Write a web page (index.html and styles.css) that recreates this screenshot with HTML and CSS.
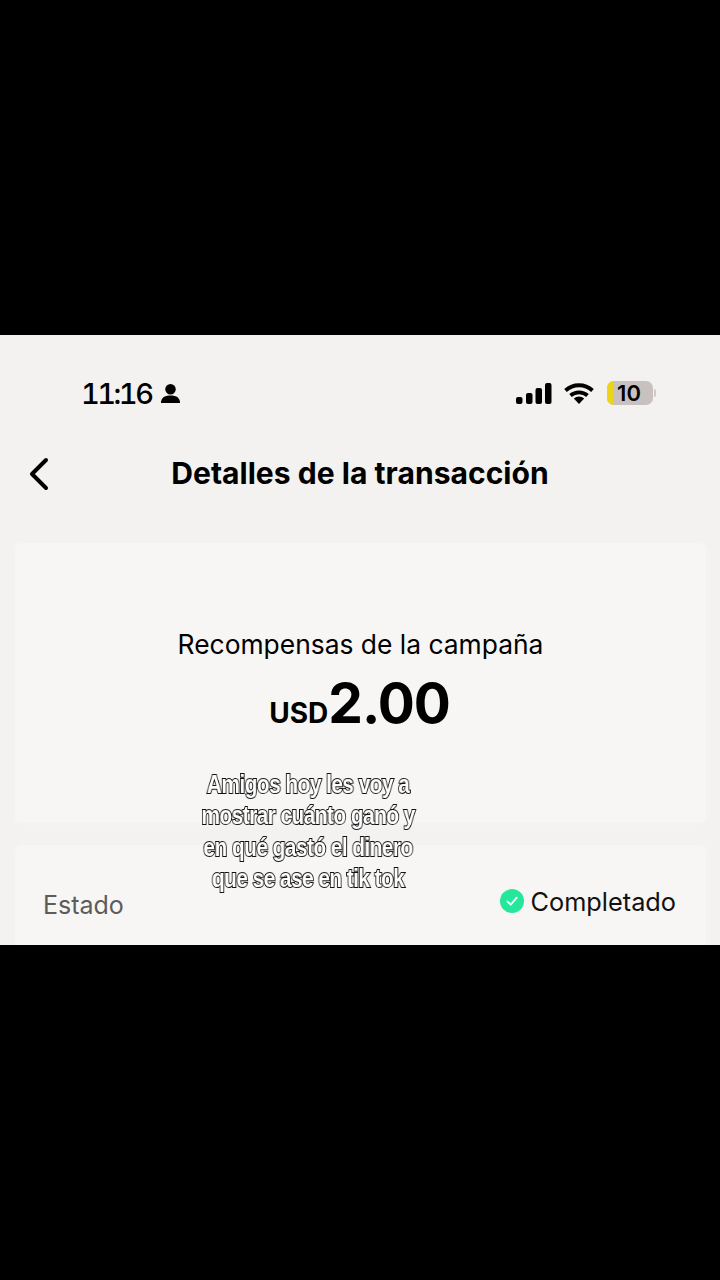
FILE: index.html
```html
<!DOCTYPE html>
<html lang="es">
<head>
  <meta charset="UTF-8" />
  <meta name="viewport" content="width=device-width, initial-scale=1.0"/>
  <title>Detalles de la transacción</title>
  <link rel="stylesheet" href="styles.css">
</head>
<body>
  <div class="screen">
    <div class="status-bar">
      <div class="status-left">
        <span class="clock">11:16</span>
        <svg class="person" width="21" height="21" viewBox="0 0 22 22"><circle cx="11" cy="6.500" r="5.500"/><path d="M1 21c0-5.500 3.500-8 10-8s10 2.500 10 8z"/></svg>
      </div>
      <div class="status-right">
        <svg class="signal" width="36" height="21" viewBox="0 0 36 21"><rect x="0" y="14" width="6.500" height="7" rx="2"/><rect x="10" y="10" width="6.500" height="11" rx="2"/><rect x="19.500" y="5" width="6.500" height="16" rx="2"/><rect x="29" y="0" width="6.500" height="21" rx="2"/></svg>
        <svg class="wifi" width="30" height="21" viewBox="0 0 30 21"><path d="M1.500 7.500a20 20 0 0 1 27 0M6.500 12.500a13 13 0 0 1 17 0" fill="none" stroke="#000" stroke-width="3.800"/><path d="M9.800 15.500a7.500 7.500 0 0 1 10.400 0L15 21z"/></svg>
        <div class="battery"><span class="battery-level"></span><span class="battery-num">10</span></div>
        <span class="battery-cap"></span>
      </div>
    </div>

    <div class="nav">
      <svg class="back" width="22" height="34" viewBox="0 0 22 34"><path d="M18 3 4 17l14 14" fill="none" stroke="#000" stroke-width="4" stroke-linecap="round" stroke-linejoin="round"/></svg>
      <h1 class="nav-title">Detalles de la transacción</h1>
    </div>

    <div class="card card-amount">
      <div class="amount-label">Recompensas de la campaña</div>
      <div class="amount"><span class="currency">USD</span><span class="value">2.00</span></div>
    </div>

    <div class="card card-details">
      <div class="row">
        <span class="row-label">Estado</span>
        <span class="row-value">
          <svg width="24" height="24" viewBox="0 0 24 24"><circle cx="12" cy="12" r="12" fill="#25e79b"/><path d="M7.500 12.500l3.200 3.200 6-7" fill="none" stroke="#fff" stroke-width="1.800" stroke-linecap="round" stroke-linejoin="round"/></svg>
          Completado
        </span>
      </div>
    </div>

    <div class="caption">
      <div>Amigos hoy les voy a</div>
      <div>mostrar cuánto ganó y</div>
      <div>en qué gastó el dinero</div>
      <div>que se ase en tik tok</div>
    </div>
  </div>
</body>
</html>
```

FILE: styles.css
```css
html, body {
  margin: 0;
  height: 1280px;
  background: #000;
  overflow: hidden;
}
body {
  padding-top: 335px;
  box-sizing: border-box;
  font-family: Inter, 'Liberation Sans', sans-serif;
  color: #000;
}
.screen {
  position: relative;
  height: 610px;
  overflow: hidden;
  background: #f3f2f0;
}
.status-bar {
  display: flex;
  justify-content: space-between;
  align-items: center;
  height: 22px;
  padding: 47px 67px 0 81px;
}
.status-left, .status-right {
  display: flex;
  align-items: center;
}
.clock {
  font-size: 29px;
  font-weight: 500;
  font-feature-settings: 'tnum';
  letter-spacing: -2.500px;
  margin-right: 9px;
}
.signal { margin-right: 12px; }
.wifi { margin-right: 13px; }
.battery {
  position: relative;
  width: 46px;
  height: 24px;
  border-radius: 7px;
  background: #c9c1c0;
  overflow: hidden;
  display: flex;
  justify-content: center;
  align-items: center;
}
.battery-level {
  position: absolute;
  left: 0;
  top: 0;
  bottom: 0;
  width: 6px;
  background: #ecd516;
}
.battery-num {
  font-size: 22px;
  font-weight: 600;
  position: relative;
  left: -1px;
}
.battery-cap {
  width: 2px;
  height: 8px;
  margin-left: 1px;
  margin-right: -3px;
  border-radius: 0 2px 2px 0;
  background: #cfc9c8;
}
.nav {
  position: relative;
  height: 34px;
  margin-top: 52px;
  display: flex;
  justify-content: center;
  align-items: center;
}
.back {
  position: absolute;
  left: 28px;
  top: 1px;
}
.nav-title {
  margin: 0;
  font-size: 30.100px;
  font-weight: 700;
}
.card {
  background: #f7f6f4;
  margin: 0 14px 0 15px;
  border-radius: 6px;
  box-shadow: 0 0 5px #f6f5f3;
}
.card-amount {
  margin-top: 53px;
  height: 280px;
  display: flex;
  flex-direction: column;
  align-items: center;
  padding-top: 84px;
  box-sizing: border-box;
}
.amount-label {
  font-size: 26.400px;
  line-height: 34px;
}
.amount {
  display: flex;
  align-items: baseline;
  font-weight: 700;
  margin-top: 11px;
  padding-right: 2px;
  line-height: 62px;
}
.currency { font-size: 28px; }
.value {
  font-size: 55px;
  letter-spacing: -1px;
}
.card-details {
  margin-top: 22px;
  height: 120px;
}
.row {
  display: flex;
  justify-content: space-between;
  padding: 42px 30px 0 28px;
}
.row-label {
  font-size: 25px;
  color: #5c5c5c;
  padding-top: 3px;
}
.row-value {
  display: flex;
  align-items: center;
  gap: 7px;
  height: 30px;
  margin-top: -1px;
  font-size: 25.300px;
  color: #111;
}
.caption {
  position: absolute;
  left: 158px;
  top: 434px;
  width: 300px;
  text-align: center;
  font-family: 'Liberation Sans', sans-serif;
  font-size: 26px;
  font-weight: 700;
  line-height: 31.300px;
  letter-spacing: -0.8px;
  color: #fff;
  -webkit-text-stroke: 2px #111;
  paint-order: stroke fill;
  transform: scaleX(0.81);
  will-change: transform;
}
```
